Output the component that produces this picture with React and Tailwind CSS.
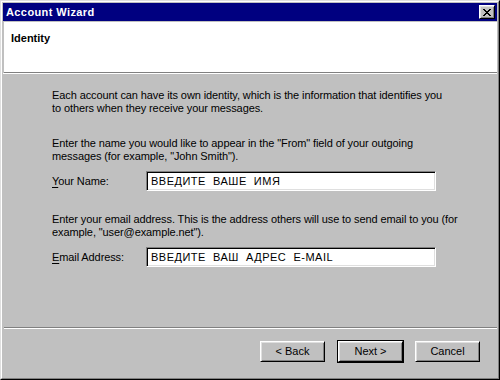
const raised =
  'border border-t-white border-l-white border-r-black border-b-black shadow-[inset_1px_1px_0_#dfdfdf,inset_-1px_-1px_0_#808080]'

const Field = ({ hot, rest, value }) => (
  <div className="flex items-center">
    <div className="w-[94px] whitespace-nowrap">
      <span className="underline underline-offset-2">{hot}</span>
      {rest}
    </div>
    <div className="h-[20px] w-[290px] border border-t-[#808080] border-l-[#808080] border-r-white border-b-white bg-white shadow-[inset_1px_1px_0_#000,inset_-1px_-1px_0_#dfdfdf]">
      <div className="whitespace-pre pl-[4px] pt-[3px] text-[11px] leading-[13px] tracking-[0.5px] text-black">{value}</div>
    </div>
  </div>
)

const Button = ({ children, primary, className = '' }) => (
  <div className={`${primary ? 'border border-black' : 'border border-transparent'} ${className}`}>
    <div className={`${raised} flex h-[21px] w-[65px] items-center justify-center text-[11px] text-black`}>{children}</div>
  </div>
)

export default function App() {
  return (
    <div className="h-[380px] w-[500px] border border-t-[#dfdfdf] border-l-[#dfdfdf] border-r-black border-b-black bg-[#c0c0c0] font-['Liberation_Sans',Arial,sans-serif] text-[11px] leading-[13px] text-black">
      <div className="flex h-full flex-col border border-t-white border-l-white border-r-[#808080] border-b-[#808080] p-[1px]">
        {/* title bar */}
        <div className="flex h-[18px] shrink-0 items-center justify-between bg-[#000080] pl-[3px] pr-[2px]">
          <span className="text-[11px] font-bold tracking-[0.4px] text-white">Account Wizard</span>
          <div className={`${raised} flex h-[14px] w-[16px] items-center justify-center bg-[#c0c0c0]`}>
            <svg width="8" height="7" viewBox="0 0 8 7" shapeRendering="crispEdges">
              <path
                fill="#000"
                d="M0 0h2v1H0zM6 0h2v1H6zM1 1h2v1H1zM5 1h2v1H5zM2 2h4v1H2zM3 3h2v1H3zM2 4h4v1H2zM1 5h2v1H1zM5 5h2v1H5zM0 6h2v1H0zM6 6h2v1H6z"
              />
            </svg>
          </div>
        </div>

        {/* header */}
        <div className="mt-[1px] ml-[1px] h-[51px] shrink-0 border-b border-[#808080] bg-white pl-[7px] pt-[10px]">
          <div className="font-bold">Identity</div>
        </div>
        <div className="h-[1px] shrink-0 bg-white" />

        {/* body */}
        <div className="flex-1 pl-[49px] pt-[15px] tracking-[-0.1px]">
          <p className="whitespace-nowrap">
            Each account can have its own identity, which is the information that identifies you
            <br />
            to others when they receive your messages.
          </p>
          <p className="mt-[22px] whitespace-nowrap">
            Enter the name you would like to appear in the "From" field of your outgoing
            <br />
            messages (for example, "John Smith").
          </p>
          <div className="mt-[8px]">
            <Field hot="Y" rest="our Name:" value="ВВЕДИТЕ  ВАШЕ  ИМЯ" />
          </div>
          <p className="mt-[22px] whitespace-nowrap">
            Enter your email address. This is the address others will use to send email to you (for
            <br />
            example, "user@example.net").
          </p>
          <div className="mt-[8px]">
            <Field hot="E" rest="mail Address:" value="ВВЕДИТЕ  ВАШ  АДРЕС  E-MAIL" />
          </div>
        </div>

        {/* footer */}
        <div className="ml-[1px] h-[1px] shrink-0 bg-[#808080]" />
        <div className="ml-[1px] h-[1px] shrink-0 bg-white" />
        <div className="flex h-[48px] shrink-0 items-start justify-end gap-[10px] pr-[16px] pt-[11px]">
          <Button className="mr-[1px]">&lt; Back</Button>
          <Button primary>Next &gt;</Button>
          <Button>Cancel</Button>
        </div>
      </div>
    </div>
  )
}
